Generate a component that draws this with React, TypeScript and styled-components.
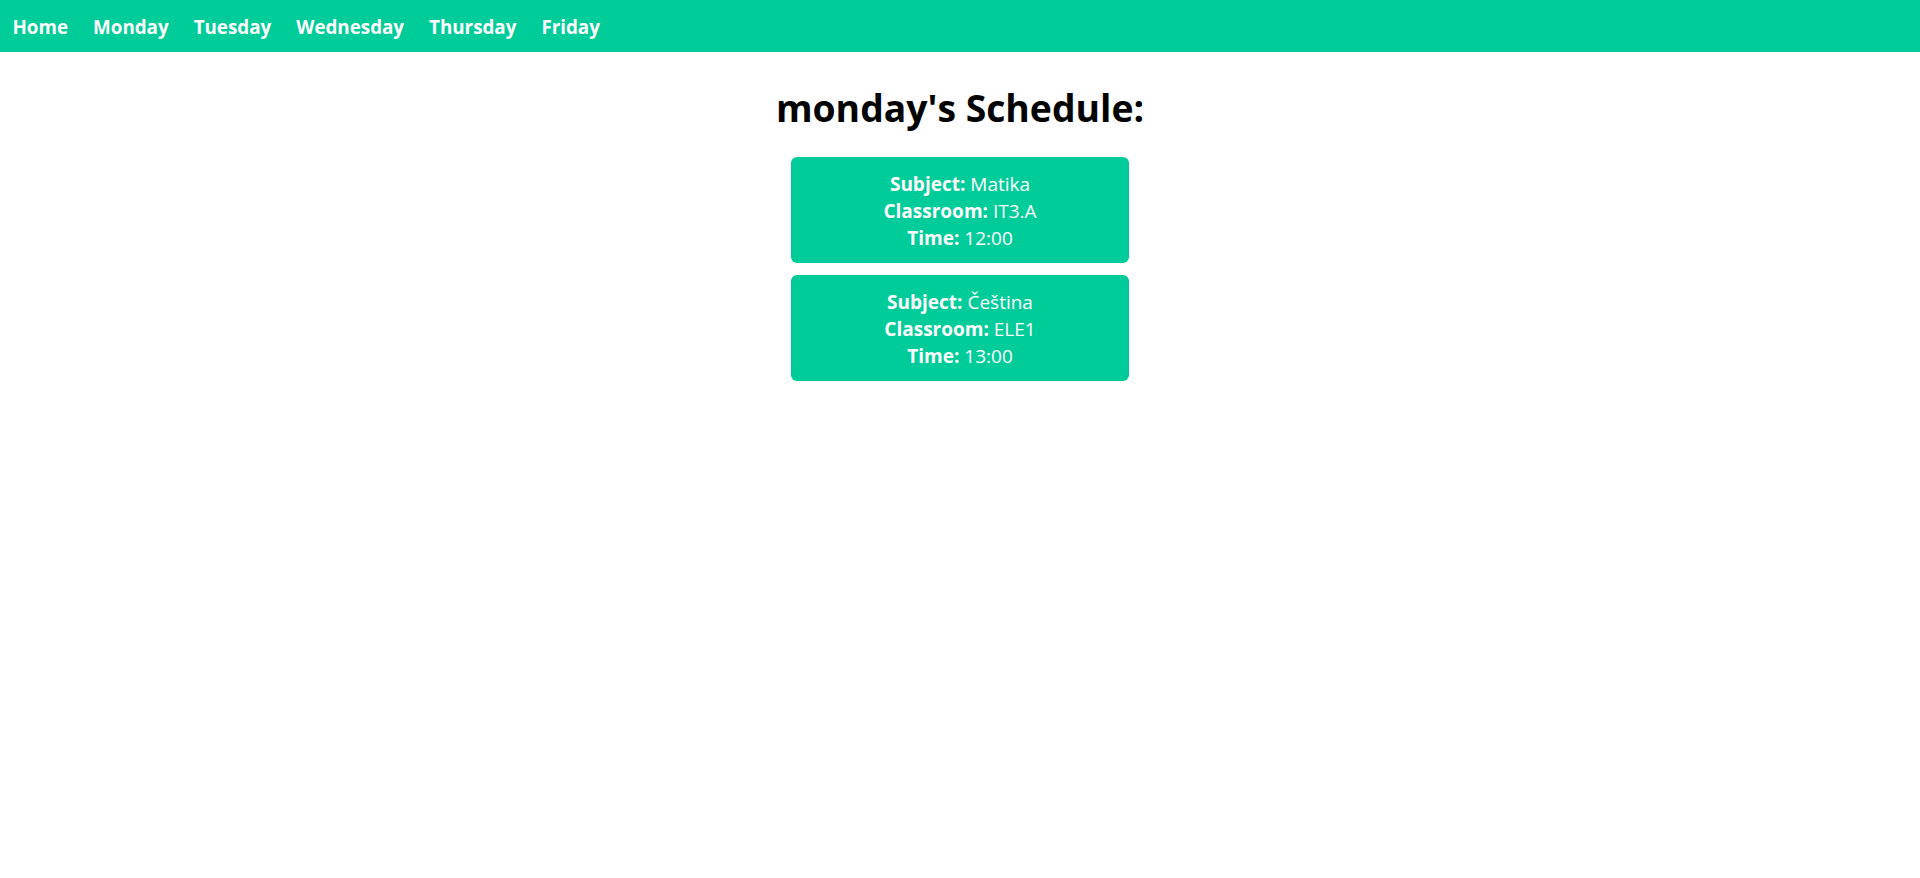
import React from "react";
import styled, { createGlobalStyle } from "styled-components";

const Global = createGlobalStyle`
  html, body { margin: 0; padding: 0; background: #ffffff; }
  body { font-family: "Open Sans", "Noto Sans", sans-serif; }
`;

const Nav = styled.nav`
  display: flex;
  align-items: center;
  height: 52px;
  box-sizing: border-box;
  padding-top: 2px;
  background: #00cc99;
`;

const NavLink = styled.a`
  color: #ffffff;
  font-weight: 700;
  font-size: 18.8px;
  text-decoration: none;
  padding: 0 12.5px;
`;

const Main = styled.main`
  display: flex;
  flex-direction: column;
  align-items: center;
`;

const Title = styled.h1`
  font-size: 37.3px;
  font-weight: 700;
  color: #000;
  margin: 35px 0 28px;
  line-height: 42px;
`;

const CardList = styled.div`
  display: flex;
  flex-direction: column;
  gap: 12px;
`;

const Card = styled.div`
  width: 338px;
  box-sizing: border-box;
  background: #00cc99;
  color: #fff;
  border-radius: 6px;
  padding: 14px 10px 11px;
  text-align: center;
  font-size: 19px;
  line-height: 27px;
`;

const Line = styled.div``;

const Label = styled.strong`
  font-weight: 700;
`;

const days = ["Home", "Monday", "Tuesday", "Wednesday", "Thursday", "Friday"];
const lessons = [
  { subject: "Matika", classroom: "IT3.A", time: "12:00" },
  { subject: "Čeština", classroom: "ELE1", time: "13:00" },
];

export default function App() {
  return (
    <>
      <Global />
      <Nav>
        {days.map((d) => (
          <NavLink key={d} href="#">
            {d}
          </NavLink>
        ))}
      </Nav>
      <Main>
        <Title>monday's Schedule:</Title>
        <CardList>
          {lessons.map((l) => (
            <Card key={l.subject}>
              <Line>
                <Label>Subject:</Label> {l.subject}
              </Line>
              <Line>
                <Label>Classroom:</Label> {l.classroom}
              </Line>
              <Line>
                <Label>Time:</Label> {l.time}
              </Line>
            </Card>
          ))}
        </CardList>
      </Main>
    </>
  );
}
